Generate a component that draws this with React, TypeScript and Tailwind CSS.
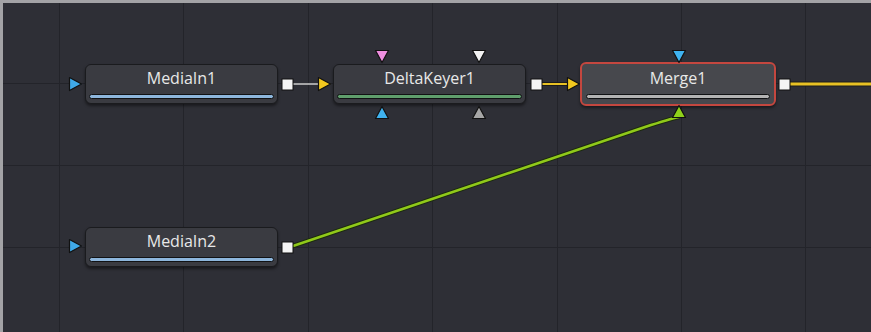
import type { ReactNode } from 'react';

type Tri = { x: number; y: number; dir: 'right' | 'down' | 'up'; fill: string };

const cols = [59, 183, 308, 432, 557, 681, 805];
const rows = [83, 165, 247];

const triangles: Tri[] = [
  { x: 75, y: 84, dir: 'right', fill: '#3fa9e8' },
  { x: 75, y: 246, dir: 'right', fill: '#3fa9e8' },
  { x: 324, y: 84, dir: 'right', fill: '#f2c81f' },
  { x: 573, y: 84, dir: 'right', fill: '#f2c81f' },
  { x: 382, y: 56, dir: 'down', fill: '#ef8ee0' },
  { x: 479, y: 56, dir: 'down', fill: '#f2f2f2' },
  { x: 382, y: 113, dir: 'up', fill: '#3fb2ef' },
  { x: 479, y: 113, dir: 'up', fill: '#a6a6a6' },
  { x: 679, y: 56, dir: 'down', fill: '#3fb2ef' },
  { x: 679, y: 112, dir: 'up', fill: '#8fd11a' },
];

const outputs = [
  { x: 287, y: 84 },
  { x: 536, y: 84 },
  { x: 784, y: 84 },
  { x: 287, y: 247 },
];

function triPoints({ x, y, dir }: Tri) {
  const s = 6.5;
  if (dir === 'right') return `${x - s + 1},${y - s} ${x + s},${y} ${x - s + 1},${y + s}`;
  if (dir === 'down') return `${x - s},${y - s + 1} ${x + s},${y - s + 1} ${x},${y + s}`;
  return `${x - s},${y + s - 1} ${x + s},${y + s - 1} ${x},${y - s}`;
}

function Node({ left, top, label, bar, active, children }: {
  left: string; top: string; label: string; bar: string; active?: boolean; children?: ReactNode;
}) {
  return (
    <div
      className={`absolute ${left} ${top} flex flex-col items-stretch rounded-[6px] shadow-[0_2px_3px_rgba(0,0,0,0.45)] ${
        active
          ? 'w-[196px] h-[44px] border-2 border-[#c4473f] bg-[#47484d] px-[4px] pt-[4px]'
          : 'w-[193px] h-[40px] border border-[#1a1b1e] bg-[#3a3b41] px-[3px] pt-[3px]'
      }`}
    >
      <div className="text-center text-[16px] font-medium leading-[20px] text-[#e8e8e8] font-['Open_Sans',sans-serif]">{label}</div>
      <div className={`mt-[6px] h-[5px] rounded-full border border-[#111214] ${bar}`} />
      {children}
    </div>
  );
}

export default function App() {
  return (
    <div className="relative w-[871px] h-[332px] overflow-hidden bg-[#2e2f36] shadow-[inset_3px_3px_0_#a3a3a6]">
      <svg className="absolute inset-0" width={871} height={332}>
        {cols.map(x => (
          <line key={`c${x}`} x1={x + 0.5} y1={3} x2={x + 0.5} y2={332} stroke="#23242a" strokeWidth={1} />
        ))}
        {rows.map(y => (
          <line key={`r${y}`} x1={3} y1={y + 0.5} x2={871} y2={y + 0.5} stroke="#23242a" strokeWidth={1} />
        ))}

        {/* wires */}
        <line x1={292} y1={84} x2={319} y2={84} stroke="#cfcfcf" strokeWidth={1.5} />
        <line x1={541} y1={84} x2={568} y2={84} stroke="#1c1c1c" strokeWidth={4} />
        <line x1={541} y1={84} x2={568} y2={84} stroke="#e8c124" strokeWidth={2} />
        <line x1={790} y1={84} x2={871} y2={84} stroke="#1c1c1c" strokeWidth={5} />
        <line x1={790} y1={84} x2={871} y2={84} stroke="#e8c124" strokeWidth={3} />
        <path d="M293 246 L645 127 Q670 119 679 117" fill="none" stroke="#1c2a10" strokeWidth={4.5} />
        <path d="M293 246 L645 127 Q670 119 679 117" fill="none" stroke="#90c91a" strokeWidth={2.5} />
      </svg>

      <Node left="left-[85px]" top="top-[64px]" label="MediaIn1" bar="bg-[#8db6dc]" />
      <Node left="left-[333px]" top="top-[64px]" label="DeltaKeyer1" bar="bg-[#5f9e6c]" />
      <Node left="left-[580px]" top="top-[62px]" label="Merge1" bar="bg-[#b3b3b3]" active />
      <Node left="left-[85px]" top="top-[227px]" label="MediaIn2" bar="bg-[#8db6dc]" />

      <svg className="absolute inset-0 pointer-events-none" width={871} height={332}>
        {triangles.map((t, i) => (
          <polygon key={i} points={triPoints(t)} fill={t.fill} stroke="#111" strokeWidth={1.2} strokeLinejoin="round" />
        ))}
        {outputs.map((o, i) => (
          <rect key={i} x={o.x - 5} y={o.y - 5} width={11} height={11} fill="#f4f4f4" stroke="#111" strokeWidth={1} />
        ))}
      </svg>
    </div>
  );
}
